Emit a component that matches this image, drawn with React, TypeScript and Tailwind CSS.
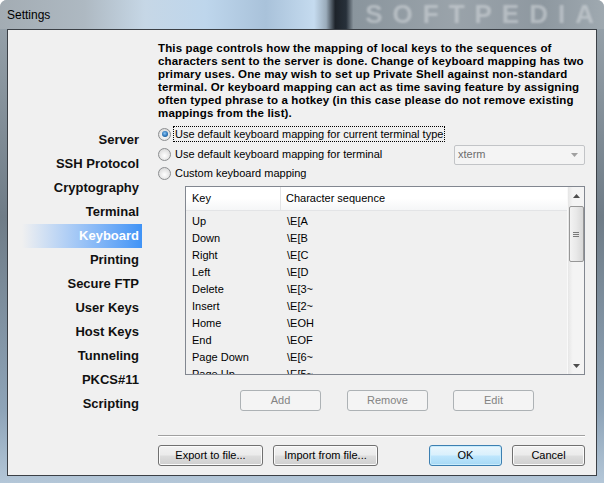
import React from "react";

const navItems = [
  "Server",
  "SSH Protocol",
  "Cryptography",
  "Terminal",
  "Keyboard",
  "Printing",
  "Secure FTP",
  "User Keys",
  "Host Keys",
  "Tunneling",
  "PKCS#11",
  "Scripting",
];

const descLines = [
  "This page controls how the mapping of local keys to the sequences of",
  "characters sent to the server is done. Change of keyboard mapping has two",
  "primary uses. One may wish to set up Private Shell against non-standard",
  "terminal. Or keyboard mapping can act as time saving feature by assigning",
  "often typed phrase to a hotkey (in this case please do not remove existing",
  "mappings from the list).",
];

const mappings: [string, string][] = [
  ["Up", "\\E[A"],
  ["Down", "\\E[B"],
  ["Right", "\\E[C"],
  ["Left", "\\E[D"],
  ["Delete", "\\E[3~"],
  ["Insert", "\\E[2~"],
  ["Home", "\\EOH"],
  ["End", "\\EOF"],
  ["Page Down", "\\E[6~"],
  ["Page Up", "\\E[5~"],
];

function Radio({ checked }: { checked?: boolean }) {
  return (
    <span className="flex h-[13px] w-[13px] shrink-0 items-center justify-center rounded-full border border-[#8c8e90] bg-[radial-gradient(circle_at_50%_60%,#ffffff_0%,#e3e3e3_60%,#cfcfcf_100%)]">
      {checked && (
        <span className="h-[6px] w-[6px] rounded-full bg-[radial-gradient(circle_at_45%_40%,#8cc6f5_0%,#2b74b8_55%,#0d3b6b_100%)]" />
      )}
    </span>
  );
}

function Button({
  label,
  w,
  disabled,
  primary,
}: {
  label: string;
  w: string;
  disabled?: boolean;
  primary?: boolean;
}) {
  let cls =
    "border-[#707070] bg-[linear-gradient(180deg,#f2f2f2_0%,#ebebeb_48%,#dddddd_52%,#cfcfcf_100%)] text-black shadow-[inset_0_0_0_1px_#fbfbfb]";
  if (disabled) cls = "border-[#adb2b5] bg-[#f4f4f4] text-[#838383]";
  if (primary)
    cls =
      "border-[#3c7fb1] bg-[linear-gradient(180deg,#eaf6fd_0%,#d9f0fc_48%,#bee6fd_52%,#a7d9f5_100%)] text-black shadow-[inset_0_0_0_1px_#c9ecfc]";
  return (
    <div
      className={`flex h-[21px] ${w} items-center justify-center rounded-[3px] border text-[11px] ${cls}`}
    >
      {label}
    </div>
  );
}

export default function App() {
  return (
    <div className="flex h-[483px] w-[604px] flex-col overflow-hidden rounded-t-[7px] bg-[linear-gradient(180deg,#9aa5ad_0%,#6f7c87_45%,#8ea4b8_85%,#b4c7d8_100%)] font-['Liberation_Sans',Arial,sans-serif]">
      {/* title bar */}
      <div className="flex h-[29px] shrink-0 items-center overflow-hidden bg-[linear-gradient(90deg,#a3acb3_0%,#aeb9c2_14%,#c6d7e6_24%,#bed6ec_34%,#a9c2da_44%,#c5dbef_52%,#9aabba_54%,#1d232a_55.5%,#27303a_57.3%,#8a959d_58.5%,#9aa3aa_75%,#8e98a0_90%,#9fa9b0_100%)] pl-[7px]">
        <span className="text-[12px] text-black">Settings</span>
        <span className="ml-auto text-[26px] font-bold leading-[29px] tracking-[10px] text-[#cfd4d8] opacity-60 blur-[1px]">
          SOFTPEDIA
        </span>
      </div>

      {/* client area */}
      <div className="flex flex-1 px-[7px] pb-[7px]">
        <div className="flex flex-1 border border-[#3b4046] bg-[#f0f0f0]">
          {/* nav */}
          <div className="flex w-[150px] shrink-0 flex-col pl-[14px] pr-[16px] pt-[98px]">
            {navItems.map((item) => {
              const sel = item === "Keyboard";
              return (
                <div
                  key={item}
                  className={`flex h-[24px] items-center justify-end pr-[3px] text-[13px] font-bold ${
                    sel
                      ? "bg-gradient-to-r from-[#f0f0f0] to-[#3f93f6] text-white"
                      : "text-[#111]"
                  }`}
                >
                  {item}
                </div>
              );
            })}
          </div>

          {/* content */}
          <div className="flex flex-1 flex-col pr-[11px] pt-[12px]">
            <div className="text-[11.5px] font-bold leading-[13px] tracking-[0.15px] text-black">
              {descLines.map((l) => (
                <div key={l} className="whitespace-nowrap">
                  {l}
                </div>
              ))}
            </div>

            <div className="mt-[4px] flex flex-col text-[11px] text-black">
              <div className="flex h-[20px] items-center">
                <Radio checked />
                <span className="ml-[2px] border border-dotted border-black px-[1px] leading-[14px]">
                  Use default keyboard mapping for current terminal type
                </span>
              </div>
              <div className="flex h-[21px] items-center">
                <Radio />
                <span className="ml-[4px]">
                  Use default keyboard mapping for terminal
                </span>
                <div className="ml-auto flex h-[20px] w-[131px] items-center justify-between rounded-[2px] border border-[#c2c4c7] bg-[#f4f4f4] pl-[3px] pr-[6px] text-[#6d6d6d]">
                  <span>xterm</span>
                  <svg width="7" height="4" viewBox="0 0 7 4">
                    <path d="M0 0h7L3.5 4z" fill="#a0a0a0" />
                  </svg>
                </div>
              </div>
              <div className="flex h-[17px] items-center">
                <Radio />
                <span className="ml-[4px]">Custom keyboard mapping</span>
              </div>
            </div>

            {/* table */}
            <div className="ml-[27px] mt-[4px] flex h-[189px] border border-[#828790] text-[11px] text-black">
              <div className="flex flex-1 flex-col overflow-hidden">
                <div className="flex h-[24px] shrink-0 items-center border-b border-[#e3e4e6] bg-[linear-gradient(180deg,#ffffff_0%,#ffffff_50%,#f5f6f7_100%)]">
                  <div className="flex h-full w-[95px] items-center border-r border-[#e3e4e6] pl-[6px]">
                    Key
                  </div>
                  <div className="pl-[5px]">Character sequence</div>
                </div>
                <div className="flex flex-col pt-[2px]">
                  {mappings.map(([k, s]) => (
                    <div key={k} className="flex h-[17px] shrink-0 items-center">
                      <div className="w-[95px] pl-[6px]">{k}</div>
                      <div className="pl-[6px]">{s}</div>
                    </div>
                  ))}
                </div>
              </div>
              {/* scrollbar */}
              <div className="flex w-[17px] shrink-0 flex-col items-center border-l border-[#f9f9f9] bg-[linear-gradient(90deg,#e6e6e6_0%,#f4f4f4_30%,#f4f4f4_100%)]">
                <div className="flex h-[17px] w-full items-center justify-center">
                  <svg width="7" height="4" viewBox="0 0 7 4">
                    <path d="M3.5 0L7 4H0z" fill="#4d4d4d" />
                  </svg>
                </div>
                <div className="mt-[2px] flex h-[56px] w-[15px] items-center justify-center rounded-[2px] border border-[#979797] bg-[linear-gradient(90deg,#f3f3f3_0%,#e8e8e8_50%,#d8d8d8_100%)]">
                  <div className="flex flex-col gap-[1px]">
                    <div className="h-[1px] w-[6px] bg-[#7a7a7a]" />
                    <div className="h-[1px] w-[6px] bg-[#7a7a7a]" />
                    <div className="h-[1px] w-[6px] bg-[#7a7a7a]" />
                  </div>
                </div>
                <div className="mt-auto flex h-[17px] w-full items-center justify-center">
                  <svg width="7" height="4" viewBox="0 0 7 4">
                    <path d="M0 0h7L3.5 4z" fill="#4d4d4d" />
                  </svg>
                </div>
              </div>
            </div>

            {/* list buttons */}
            <div className="mt-[15px] flex pl-[82px]">
              <Button label="Add" w="w-[81px]" disabled />
              <div className="ml-[26px]">
                <Button label="Remove" w="w-[81px]" disabled />
              </div>
              <div className="ml-[25px]">
                <Button label="Edit" w="w-[81px]" disabled />
              </div>
            </div>

            <div className="mt-[24px] h-[1px] bg-[#a0a0a0] shadow-[0_1px_0_#ffffff]" />

            <div className="mt-[9px] flex">
              <Button label="Export to file..." w="w-[105px]" />
              <div className="ml-[10px]">
                <Button label="Import from file..." w="w-[105px]" />
              </div>
              <div className="ml-auto">
                <Button label="OK" w="w-[73px]" primary />
              </div>
              <div className="ml-[10px]">
                <Button label="Cancel" w="w-[73px]" />
              </div>
            </div>
          </div>
        </div>
      </div>
    </div>
  );
}
